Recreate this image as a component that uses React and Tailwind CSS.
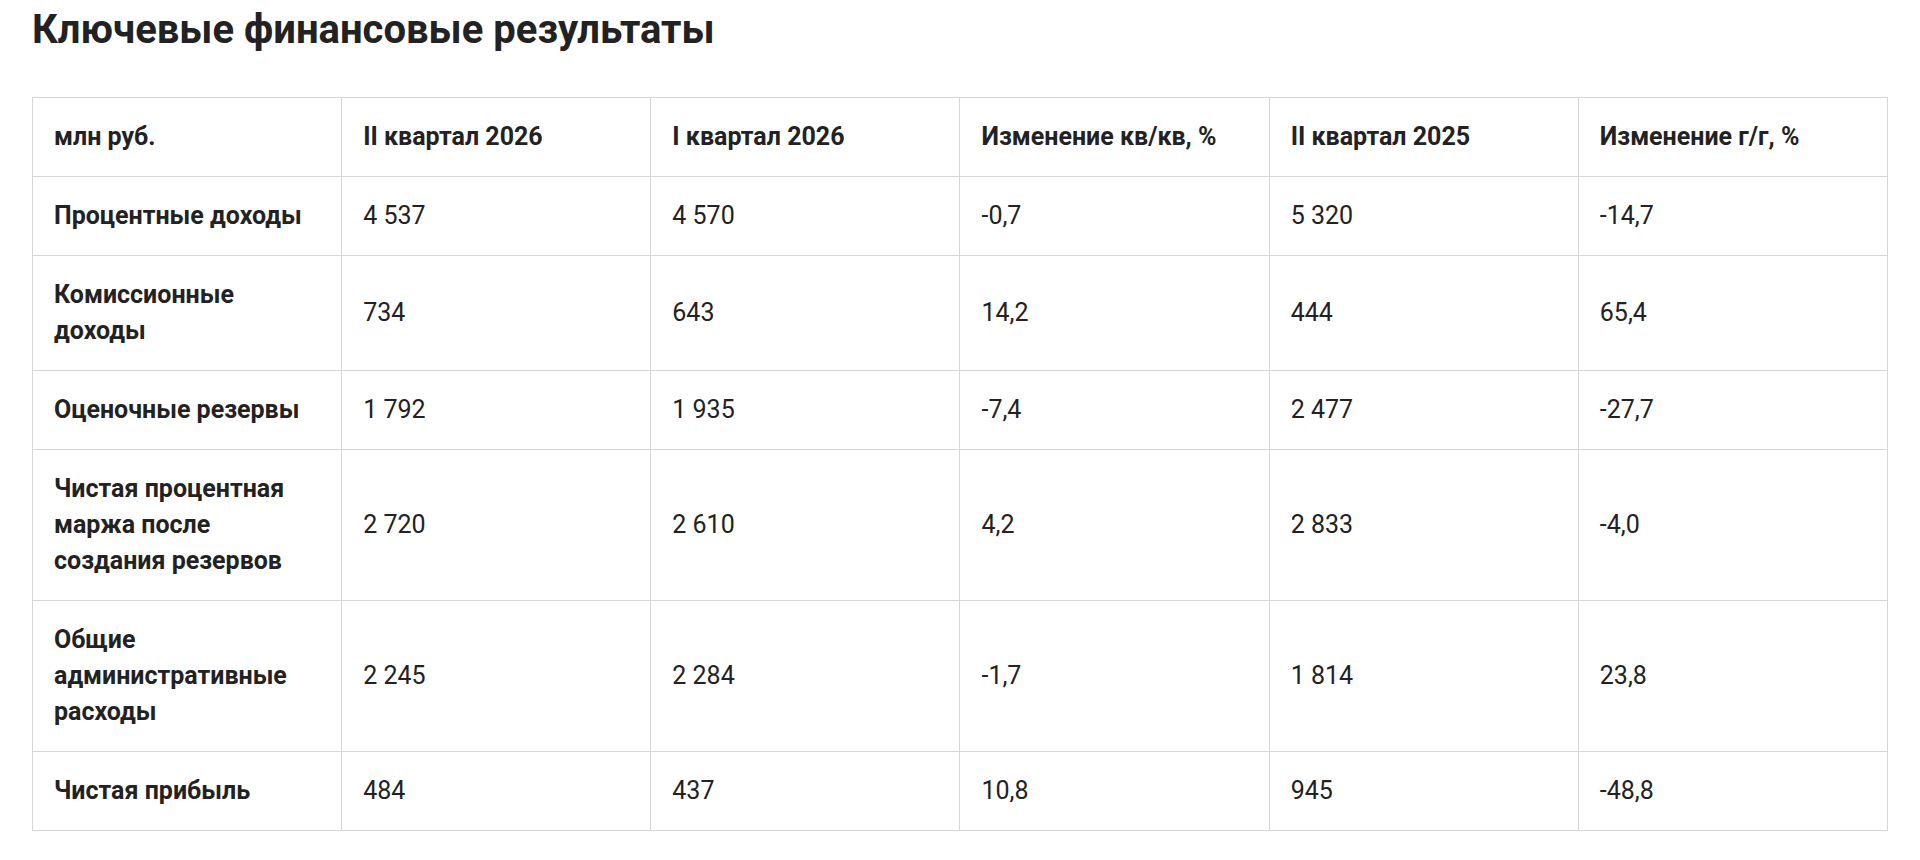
import React from "react";

const columns = [
    "млн руб.",
    "II квартал 2026",
    "I квартал 2026",
    "Изменение кв/кв, %",
    "II квартал 2025",
    "Изменение г/г, %",
];

const rows = [
    ["Процентные доходы", "4 537", "4 570", "-0,7", "5 320", "-14,7"],
    ["Комиссионные доходы", "734", "643", "14,2", "444", "65,4"],
    ["Оценочные резервы", "1 792", "1 935", "-7,4", "2 477", "-27,7"],
    ["Чистая процентная маржа после создания резервов", "2 720", "2 610", "4,2", "2 833", "-4,0"],
    ["Общие административные расходы", "2 245", "2 284", "-1,7", "1 814", "23,8"],
    ["Чистая прибыль", "484", "437", "10,8", "945", "-48,8"],
];

export default function App() {
    return (
        <div className="min-h-screen bg-white px-8 pt-[6px] text-[#222] font-['Roboto',sans-serif]">
            <h2 className="text-[40px] leading-[48px] font-bold">
                Ключевые финансовые результаты
            </h2>

            <table className="mt-[43px] w-full table-fixed border-collapse text-[25px] leading-[36px]">
                <thead>
                    <tr>
                        {columns.map((c) => (
                            <th key={c} className="border border-[#d4d6d9] p-[21px] text-left align-middle font-bold">
                                {c}
                            </th>
                        ))}
                    </tr>
                </thead>
                <tbody>
                    {rows.map((r) => (
                        <tr key={r[0]}>
                            {r.map((v, i) => (
                                <td
                                    key={i}
                                    className={
                                        "border border-[#d4d6d9] p-[21px] align-middle " +
                                        (i === 0 ? "font-bold" : "font-normal")
                                    }
                                >
                                    {v}
                                </td>
                            ))}
                        </tr>
                    ))}
                </tbody>
            </table>
        </div>
    );
}
